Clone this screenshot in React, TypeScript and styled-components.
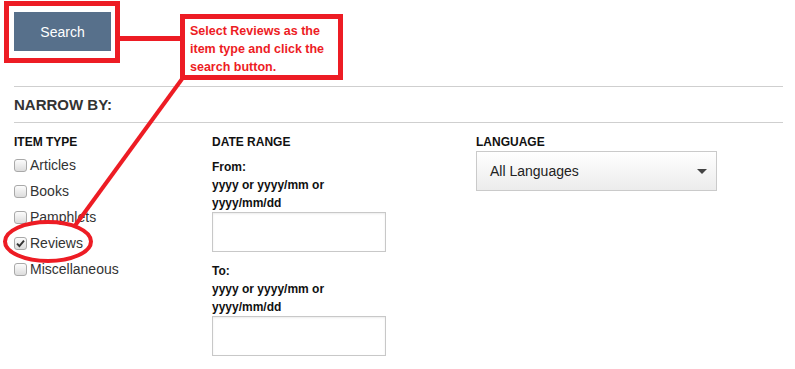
import { createGlobalStyle } from 'styled-components';
import styled from 'styled-components';

const RED = '#ed1c24';

const GlobalStyle = createGlobalStyle`
    html, body {
        margin: 0;
        padding: 0;
        background: #fff;
    }
    body {
        font-family: "Liberation Sans", Arial, sans-serif;
        color: #333;
    }
`

const SPage = styled.div`
    position: relative;
    box-sizing: border-box;
    width: 795px;
    height: 369px;
    padding: 12px 12px 0 14px;
    overflow: hidden;
`
const SSearchButton = styled.button`
    display: block;
    width: 97px;
    height: 39px;
    margin: 0 0 35px 0;
    padding: 0;
    border: none;
    border-radius: 0;
    background-color: #57708b;
    color: #fff;
    font-family: "Liberation Sans", Arial, sans-serif;
    font-size: 14px;
`
const SRule = styled.div`
    height: 0;
    border-top: 1px solid #cfcfcf;
`
const SNarrowTitle = styled.h2`
    margin: 0;
    height: 35px;
    line-height: 36px;
    font-size: 15px;
    font-weight: bold;
    color: #333;
`
const SFilters = styled.div`
    display: grid;
    grid-template-columns: 198px 264px 1fr;
    padding-top: 12px;
`
const SColumn = styled.div`
    display: flex;
    flex-direction: column;
`
const SFilterTitle = styled.h3`
    margin: 0 0 ${(p: { $gap: number }) => p.$gap}px 0;
    font-size: 12px;
    line-height: 14px;
    font-weight: bold;
    color: #111;
`
const SCheckRow = styled.label`
    display: flex;
    align-items: center;
    gap: 3px;
    height: 26px;
    font-size: 14px;
    color: #333;
`
const SBox = styled.span`
    box-sizing: border-box;
    display: flex;
    align-items: center;
    justify-content: center;
    width: 13px;
    height: 13px;
    border: 1px solid #a9a9a9;
    border-radius: 3px;
    background: linear-gradient(#fcfcfc, #dcdcdc);
`
const SFieldLabel = styled.div`
    margin-top: ${(p: { $top: number }) => p.$top}px;
    font-size: 12px;
    line-height: 18px;
    font-weight: bold;
    color: #111;
`
const SDateInput = styled.div`
    box-sizing: border-box;
    width: 174px;
    height: 40px;
    border: 1px solid #c8c8c8;
    box-shadow: inset 0 1px 2px rgba(0, 0, 0, 0.08);
    background: #fff;
`
const SSelect = styled.div`
    box-sizing: border-box;
    display: flex;
    align-items: center;
    justify-content: space-between;
    width: 241px;
    height: 40px;
    margin-top: 2px;
    padding: 0 9px 0 13px;
    border: 1px solid #cacaca;
    background: linear-gradient(#ffffff, #ececec);
    font-size: 14px;
    color: #222;
`
const SCaret = styled.span`
    width: 0;
    height: 0;
    border-left: 5px solid transparent;
    border-right: 5px solid transparent;
    border-top: 5px solid #444;
`
const SOverlay = styled.div`
    position: absolute;
    inset: 0;
    pointer-events: none;
`
const SFrame = styled.div`
    position: absolute;
    left: 4px;
    top: 1px;
    width: 116px;
    height: 62px;
    box-sizing: border-box;
    border: 5px solid ${RED};
`
const SCallout = styled.div`
    position: absolute;
    left: 180px;
    top: 14px;
    width: 163px;
    height: 66px;
    box-sizing: border-box;
    padding: 3px 0 0 5px;
    border: 5px solid ${RED};
    background: #fff;
    color: ${RED};
    font-family: "Liberation Sans", Arial, sans-serif;
    font-size: 12.5px;
    font-weight: bold;
    line-height: 18px;
    white-space: nowrap;
`

const items = [
    { name: 'Articles', checked: false },
    { name: 'Books', checked: false },
    { name: 'Pamphlets', checked: false },
    { name: 'Reviews', checked: true },
    { name: 'Miscellaneous', checked: false },
]

const CheckBox = ({ checked }: { checked: boolean }) => (
    <SBox>
        {checked && (
            <svg width="9" height="9" viewBox="0 0 9 9">
                <path d="M1 4.6 L3.4 7 L8 1.6" fill="none" stroke="#333" strokeWidth="1.9" />
            </svg>
        )}
    </SBox>
)

const App = () => {
    return (
        <>
            <GlobalStyle />
            <SPage>
                <SSearchButton>Search</SSearchButton>
                <SRule />
                <SNarrowTitle>NARROW BY:</SNarrowTitle>
                <SRule />

                <SFilters>
                    <SColumn>
                        <SFilterTitle $gap={3}>ITEM TYPE</SFilterTitle>
                        {items.map((it) => (
                            <SCheckRow key={it.name}>
                                <CheckBox checked={it.checked} />
                                {it.name}
                            </SCheckRow>
                        ))}
                    </SColumn>

                    <SColumn>
                        <SFilterTitle $gap={0}>DATE RANGE</SFilterTitle>
                        <SFieldLabel $top={9}>
                            From:<br />yyyy or yyyy/mm or<br />yyyy/mm/dd
                        </SFieldLabel>
                        <SDateInput />
                        <SFieldLabel $top={10}>
                            To:<br />yyyy or yyyy/mm or<br />yyyy/mm/dd
                        </SFieldLabel>
                        <SDateInput />
                    </SColumn>

                    <SColumn>
                        <SFilterTitle $gap={0}>LANGUAGE</SFilterTitle>
                        <SSelect>
                            All Languages
                            <SCaret />
                        </SSelect>
                    </SColumn>
                </SFilters>

                {/* annotation drawn on top of the page */}
                <SOverlay>
                    <svg width="795" height="369" viewBox="0 0 795 369">
                        <line x1="118" y1="38.5" x2="182" y2="38.5" stroke={RED} strokeWidth="5" />
                        <line x1="182" y1="79" x2="74" y2="227" stroke={RED} strokeWidth="4" />
                        <ellipse cx="48" cy="241.5" rx="43" ry="19.5" fill="none" stroke={RED} strokeWidth="4" />
                    </svg>
                    <SFrame />
                    <SCallout>
                        Select Reviews as the<br />
                        item type and click the<br />
                        search button.
                    </SCallout>
                </SOverlay>
            </SPage>
        </>
    )
}

export default App
